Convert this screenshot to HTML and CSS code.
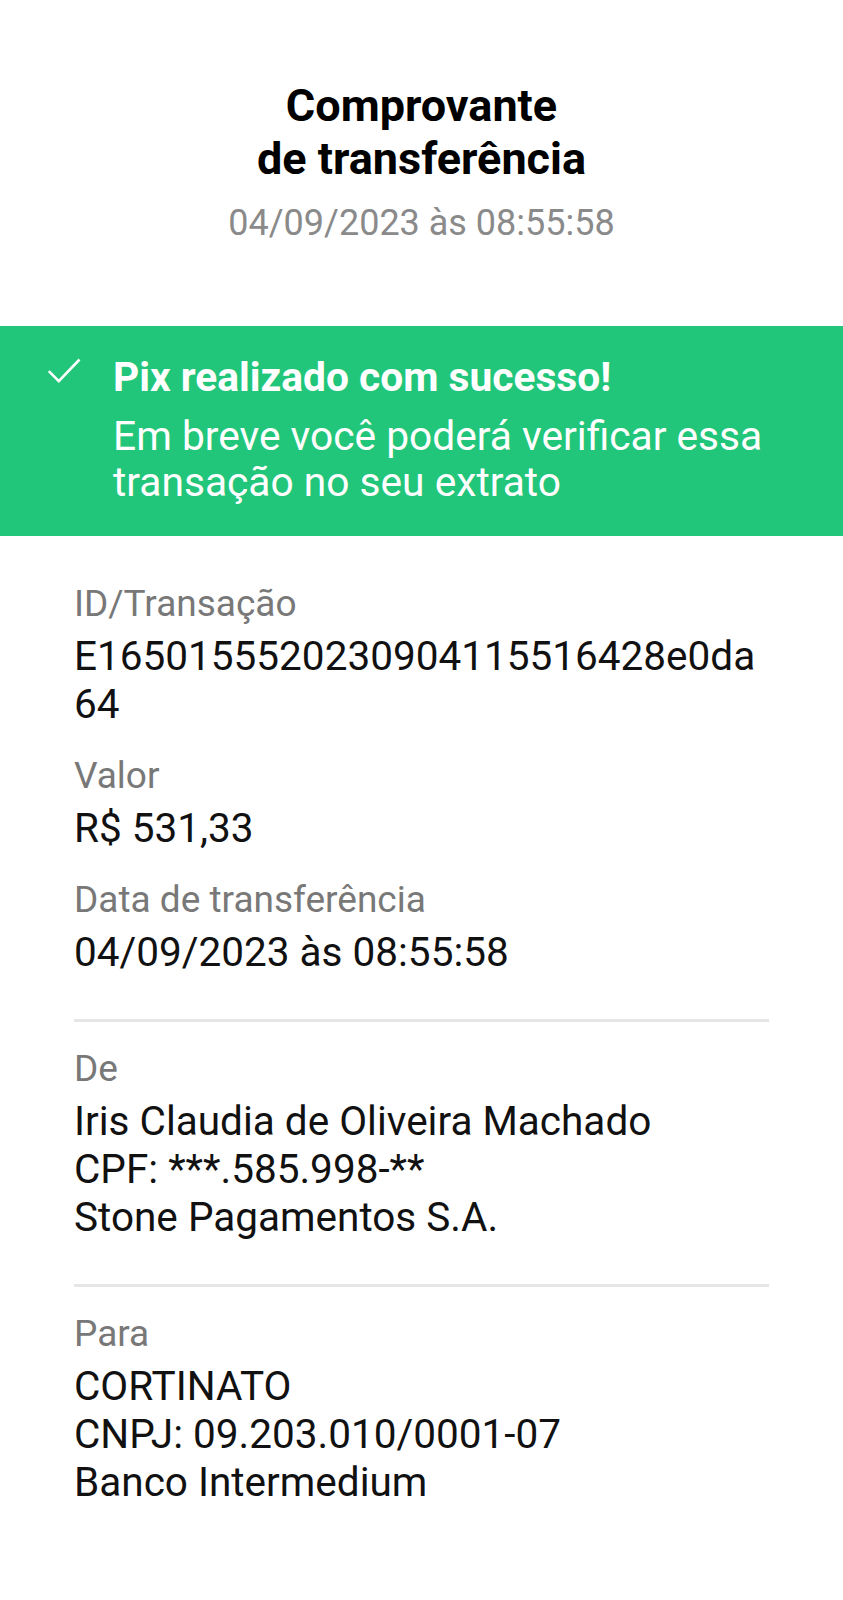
FILE: index.html
```html
<!DOCTYPE html>
<html>

<head>
	<meta charset="UTF-8">
	<title>Comprovante de transferência</title>
	<link rel="stylesheet" href="styles.css">
</head>

<body>
	<header class="header">
		<h1 class="title">Comprovante<br>de transferência</h1>
		<p class="headerDate">04/09/2023 às 08:55:58</p>
	</header>

	<section class="banner">
		<svg class="bannerIcon" width="34" height="28" viewBox="0 0 34 28">
			<polyline points="1.8,14.2 11.8,24.2 32.5,2.5" fill="none" stroke="#fff" stroke-width="2.6" />
		</svg>
		<div class="bannerText">
			<p class="bannerTitle">Pix realizado com sucesso!</p>
			<p class="bannerBody">Em breve você poderá verificar essa transação no seu extrato</p>
		</div>
	</section>

	<main class="details">
		<div class="group">
			<div class="field">
				<p class="label">ID/Transação</p>
				<p class="value breakAll">E1650155520230904115516428e0da64</p>
			</div>
			<div class="field">
				<p class="label">Valor</p>
				<p class="value">R$ 531,33</p>
			</div>
			<div class="field">
				<p class="label">Data de transferência</p>
				<p class="value">04/09/2023 às 08:55:58</p>
			</div>
		</div>
		<div class="group">
			<div class="field">
				<p class="label">De</p>
				<p class="value">Iris Claudia de Oliveira Machado<br>CPF: ***.585.998-**<br>Stone Pagamentos S.A.</p>
			</div>
		</div>
		<div class="group">
			<div class="field">
				<p class="label">Para</p>
				<p class="value">CORTINATO<br>CNPJ: 09.203.010/0001-07<br>Banco Intermedium</p>
			</div>
		</div>
	</main>
</body>

</html>
```

FILE: styles.css
```css
body {
	font-family: Roboto, "Noto Sans", sans-serif;
	margin: 0;
	background: #fff;
	color: #111;
}

p {
	margin: 0;
}

.header {
	text-align: center;
	padding: 79px 20px 81px;
}

.title {
	margin: 0;
	font-size: 45px;
	line-height: 53px;
	font-weight: 700;
	color: #000;
}

.headerDate {
	margin-top: 16px;
	font-size: 36px;
	line-height: 44px;
	color: #8a8a8a;
}

.banner {
	display: flex;
	flex-direction: row;
	align-items: flex-start;
	gap: 32px;
	background-color: #22c67a;
	color: #fff;
	padding: 28px 24px 31px 47px;
}

.bannerIcon {
	flex: none;
	margin-top: 3px;
}

.bannerTitle {
	font-size: 40.7px;
	line-height: 46px;
	font-weight: 700;
}

.bannerBody {
	margin-top: 13px;
	font-size: 40.7px;
	line-height: 46px;
}

.details {
	padding: 45px 74px 60px;
}

.group {
	display: flex;
	flex-direction: column;
	gap: 25px;
	padding: 24px 0 43px;
	border-bottom: 3px solid #e6e6e6;
}

.group:first-child {
	padding-top: 0;
}

.group:last-child {
	border-bottom: none;
}

.label {
	font-size: 37px;
	line-height: 46px;
	color: #787878;
	margin-bottom: 5px;
}

.value {
	font-size: 40.5px;
	line-height: 48px;
	color: #111;
}

.breakAll {
	word-break: break-all;
}
```
